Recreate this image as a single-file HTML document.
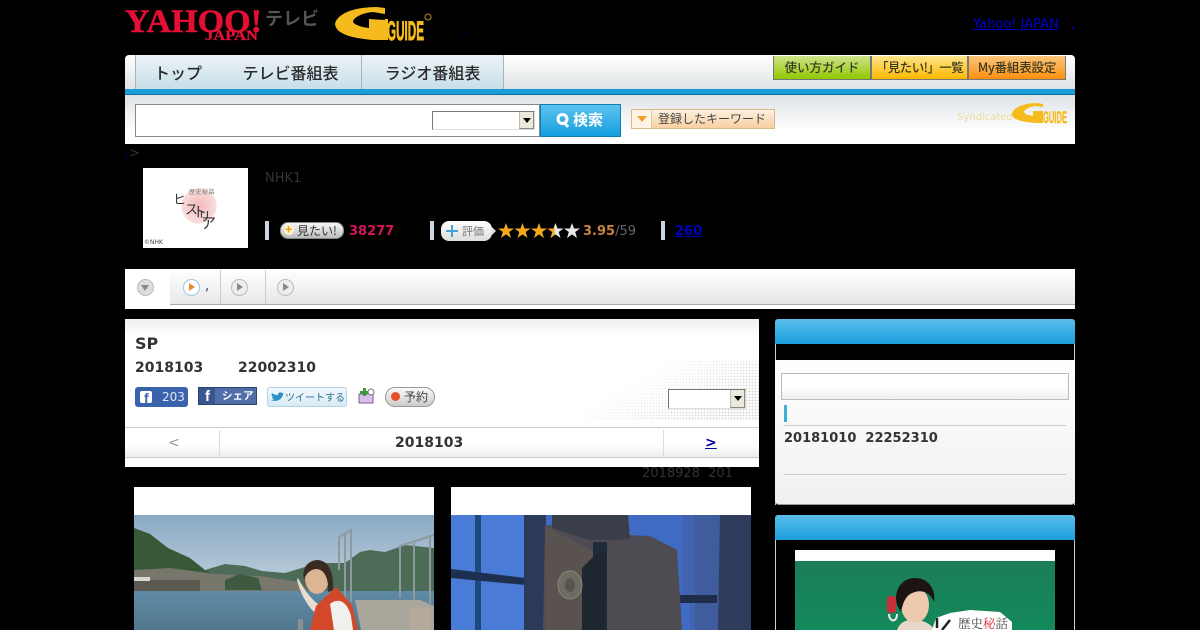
<!DOCTYPE html>
<html lang="ja"><head><meta charset="utf-8"><title>SP</title>
<style>
html,body{margin:0;padding:0;background:#000;}
body{width:1200px;height:630px;overflow:hidden;position:relative;font-family:"DejaVu Sans","Noto Sans CJK JP",sans-serif;font-size:13px;color:#333;}
.a{position:absolute;white-space:nowrap;}
.j{font-family:"Noto Sans CJK JP","DejaVu Sans",sans-serif;}
.b{font-weight:bold;}
.tab{position:absolute;top:55px;height:34px;background:linear-gradient(#edf3f6,#c6dfe9);border-right:1px solid #9fb5c0;text-align:center;font:500 16px/34px "Noto Sans CJK JP",sans-serif;color:#2a2a2a;}
.btn{position:absolute;top:56px;height:23px;text-align:center;white-space:nowrap;overflow:hidden;font:500 12.5px/22px "Noto Sans CJK JP",sans-serif;color:#3a3a20;border:1px solid #777;border-top:0;box-sizing:content-box;}
.sel{position:absolute;background:#fff;border:1px solid #777;border-right-color:#ddd;border-bottom-color:#ddd;box-sizing:border-box;}
.sel i{position:absolute;right:0;top:0;bottom:0;width:15px;background:#ece9d8;border-left:1px solid #bbb;border-bottom:1px solid #888;border-right:1px solid #888;box-sizing:border-box;}
.sel i:after{content:"";position:absolute;left:3px;top:6px;border:4px solid transparent;border-top:5px solid #000;}
.sep{position:absolute;width:4px;height:19px;background:#ccd6e0;top:221px;}
.ttab{position:absolute;top:270px;height:34px;background:linear-gradient(#fff,#e8e8e8);border-right:1px solid #ccc;box-sizing:border-box;}
.circ{position:absolute;width:15px;height:15px;border-radius:50%;background:#eee;border:1px solid #bbb;box-sizing:content-box;}
.circ i{position:absolute;left:5px;top:3px;border:4.5px solid transparent;border-left:6px solid #888;border-right:0;}
.sh{position:absolute;background:linear-gradient(#59bdea,#1b9fdc);left:775px;width:300px;height:25px;border-radius:3px 3px 0 0;}
.h{position:absolute;font-family:"Noto Sans CJK JP",sans-serif;color:#333;line-height:1;}
</style></head><body>

<!-- header -->
<svg class="a" style="left:124px;top:4px" width="142" height="40" viewBox="0 0 142 40">
<text x="1" y="28" font-family="Liberation Serif" font-weight="bold" font-size="33" fill="#e50f35" stroke="#e50f35" stroke-width="0.5" textLength="137" lengthAdjust="spacingAndGlyphs">YAHOO!</text>
<text x="81" y="36" font-family="Liberation Serif" font-weight="bold" font-size="15" fill="#e50f35" stroke="#e50f35" stroke-width="0.3" textLength="53" lengthAdjust="spacingAndGlyphs">JAPAN</text>
</svg>
<div class="a j" style="left:265px;top:5px;font-size:18px;line-height:26px;color:#555;font-weight:700;">テレビ</div>
<svg class="a" style="left:333px;top:5px" width="102" height="38" viewBox="0 0 102 38">
<path d="M2 19C4 9 20 2 44 2L52 3 52 9 40 7C28 8 20 13 20 17C22 20 28 22 36 23L36 14 52 15 52 35 40 35C18 33 3 29 2 19Z" fill="#f5bb1c"/>
<rect x="52" y="14" width="3" height="21" fill="#f5bb1c"/>
<text x="54" y="35" font-family="Liberation Sans" font-weight="bold" font-size="27" fill="#f5bb1c" stroke="#f5bb1c" stroke-width="0.9" textLength="37" lengthAdjust="spacingAndGlyphs">GUIDE</text>
<circle cx="95" cy="12" r="3" fill="none" stroke="#b58d24" stroke-width="1"/>
</svg>
<div class="a" style="left:462px;top:23px;color:#00008b;">,</div>
<div class="a" style="left:973px;top:17px;color:#0000d0;text-decoration:underline;">Yahoo! JAPAN</div>
<div class="a" style="left:1071px;top:17px;color:#0000d0;">,</div>

<!-- nav -->
<div class="a" style="left:125px;top:55px;width:950px;height:34px;background:linear-gradient(#fff,#dfe3e5);border-radius:4px 4px 0 0;"></div>
<div class="tab" style="left:135px;width:84px;border-left:1px solid #9fb5c0;">トップ</div>
<div class="tab" style="left:220px;width:141px;">テレビ番組表</div>
<div class="tab" style="left:362px;width:141px;">ラジオ番組表</div>
<div class="btn" style="left:773px;width:96px;background:linear-gradient(#cfe48a,#8fc800);">使い方ガイド</div>
<div class="btn" style="left:871px;width:95px;background:linear-gradient(#fde58a,#ffb800);letter-spacing:-0.6px;">「見たい!」一覧</div>
<div class="btn" style="left:968px;width:96px;background:linear-gradient(#fdc67a,#ff9010);letter-spacing:-0.2px;">My番組表設定</div>
<div class="a" style="left:125px;top:89px;width:950px;height:6px;background:#1b9ed8;border-bottom:1px solid #0d6f9c;box-sizing:border-box;"></div>

<!-- search -->
<div class="a" style="left:125px;top:95px;width:950px;height:49px;background:linear-gradient(#dfe3e6,#fff 75%);"></div>
<div class="a" style="left:135px;top:104px;width:405px;height:33px;background:#fff;border:1px solid #888;box-sizing:border-box;"></div>
<div class="sel" style="left:432px;top:111px;width:103px;height:19px;"><i></i></div>
<div class="a j" style="left:540px;top:104px;width:81px;height:33px;background:linear-gradient(#5cc3ef,#159fe0);border:1px solid #0d7db5;box-sizing:border-box;color:#fff;font-weight:700;font-size:15px;line-height:30px;letter-spacing:0;"><svg style="position:absolute;left:15px;top:7px" width="14" height="16" viewBox="0 0 14 16"><circle cx="6.5" cy="7" r="4.5" fill="none" stroke="#fff" stroke-width="3"/><path d="M8 10L12 15" stroke="#fff" stroke-width="3"/></svg><span style="position:absolute;left:32px;top:0;">検索</span></div>
<div class="a j" style="left:631px;top:109px;width:144px;height:20px;background:linear-gradient(#fdf0e0,#f9cfa0);border:1px solid #d9b98c;box-sizing:border-box;font-size:12px;line-height:18px;color:#444;padding-left:26px;"><span style="position:absolute;left:0;top:0;width:19px;height:18px;background:#fff3e4;border-right:1px solid #e0c8a8;"></span><span style="position:absolute;left:5px;top:6px;border:5px solid transparent;border-top:6px solid #f39a2d;"></span>登録したキーワード</div>
<div class="a" style="left:957px;top:111px;font-size:10px;line-height:13px;color:#eadb9c;">Syndicated</div>
<svg class="a" style="left:1011px;top:102px" width="57" height="23" viewBox="0 0 57 23">
<path d="M1 12C2 6 12 1 26 1L32 2 32 5 25 4C17 5 13 8 13 10C14 13 18 13 22 14L22 9 32 9 32 21 25 21C12 20 1 18 1 12Z" fill="#f5bb1c"/>
<text x="32" y="21" font-family="Liberation Sans" font-weight="bold" font-size="17" fill="#f5bb1c" stroke="#f5bb1c" stroke-width="0.4" textLength="24" lengthAdjust="spacingAndGlyphs">GUIDE</text>
</svg>

<!-- breadcrumb -->
<div class="a" style="left:125px;top:147px;color:#0000a0;">.</div>
<div class="a" style="left:129px;top:146px;color:#333;">&gt;</div>

<!-- thumb -->
<div class="a" style="left:143px;top:168px;width:105px;height:80px;background:#fff;overflow:hidden;">
  <div style="position:absolute;left:38px;top:20px;width:36px;height:36px;border-radius:50%;background:radial-gradient(#f2b8b8,#f9dcdc 65%,#fff 78%);"></div>
  <div class="h" style="left:46px;top:21px;font-size:6px;color:#777;letter-spacing:0.5px;">歴史秘話</div>
  <span class="h" style="left:30px;top:24px;font-size:13px;">ヒ</span>
  <span class="h" style="left:42px;top:34px;font-size:13px;">ス</span>
  <span class="h" style="left:50px;top:37px;font-size:14px;">ト</span>
  <span class="h" style="left:55px;top:41px;font-size:13px;">リ</span>
  <span class="h" style="left:58px;top:47px;font-size:15px;">ア</span>
  <div style="position:absolute;left:1px;top:71px;font-size:6px;line-height:8px;color:#444;">©NHK</div>
</div>
<div class="a" style="left:265px;top:171px;color:#333;">NHK1</div>

<div class="sep" style="left:265px;"></div>
<div class="a j" style="left:280px;top:222px;width:64px;height:17px;border-radius:8px;background:linear-gradient(#f7f7f7,#bbb);border:1px solid #888;box-sizing:border-box;font-size:12px;line-height:15px;color:#333;padding-left:16px;"><span style="position:absolute;left:3px;top:2px;width:10px;height:10px;border-radius:50%;background:#fff3c8;"></span><span style="position:absolute;left:4px;top:-1px;color:#e8a317;font-weight:900;">+</span>見たい!</div>
<div class="a b" style="left:349px;top:224px;color:#d4145a;">38277</div>
<div class="sep" style="left:430px;"></div>
<div class="a j" style="left:441px;top:221px;width:51px;height:20px;border-radius:8px;background:linear-gradient(#fff,#ddd);box-sizing:border-box;font-size:11px;line-height:20px;color:#777;padding-left:21px;"><span style="position:absolute;left:5px;top:9px;width:12px;height:2px;background:#4a9fd8;"></span><span style="position:absolute;left:10px;top:4px;width:2px;height:12px;background:#4a9fd8;"></span>評価<span style="position:absolute;left:51px;top:6px;border:4px solid transparent;border-left:4px solid #ddd;border-right:0;"></span></div>
<svg class="a" style="left:498px;top:222px" width="84" height="18" viewBox="0 0 84 18">
<defs><polygon id="s" points="8,1 10,6.5 16,6.5 11.2,10 13,16 8,12.4 3,16 4.8,10 0,6.5 6,6.5"/><clipPath id="hc"><rect x="0" y="0" width="7" height="18"/></clipPath></defs>
<use href="#s" fill="#f5a81c"/><use href="#s" x="16.5" fill="#f5a81c"/><use href="#s" x="33" fill="#f5a81c"/>
<use href="#s" x="49.5" fill="#e8e8e8"/><g transform="translate(49.5 0)"><use href="#s" fill="#f5a81c" clip-path="url(#hc)"/></g><use href="#s" x="66" fill="#e8e8e8"/>
</svg>
<div class="a" style="left:583px;top:224px;color:#666;"><span class="b" style="color:#c8843c;">3.95</span>/59</div>
<div class="sep" style="left:661px;"></div>
<div class="a b" style="left:675px;top:224px;color:#0000c0;text-decoration:underline;">260</div>

<!-- tabs bar -->
<div class="a" style="left:125px;top:269px;width:950px;height:40px;background:#fff;"></div>
<div class="a" style="left:170px;top:270px;width:905px;height:34px;background:linear-gradient(#fff,#e6e6e6);border-bottom:1px solid #aaa;box-sizing:content-box;"></div>
<div class="ttab" style="left:170px;width:51px;"></div>
<div class="ttab" style="left:221px;width:45px;"></div>
<div class="circ" style="left:137px;top:279px;background:#ddd;"><i style="left:3px;top:5px;border:4.5px solid transparent;border-top:6px solid #888;border-bottom:0;"></i></div>
<div class="circ" style="left:183px;top:279px;background:#fff;border-color:#9cc9e0;"><i style="border-left-color:#e8892a;"></i></div>
<div class="a" style="left:205px;top:279px;color:#335;">,</div>
<div class="circ" style="left:231px;top:279px;"><i></i></div>
<div class="circ" style="left:277px;top:279px;"><i></i></div>

<!-- main panel -->
<div class="a" style="left:125px;top:319px;width:634px;height:148px;background:linear-gradient(#eee,#fff 18px);"></div>
<div class="a" style="left:583px;top:360px;width:176px;height:60px;background-image:radial-gradient(#d8d8d8 0.8px,transparent 1px);background-size:3px 3px;-webkit-mask-image:linear-gradient(150deg,transparent 30%,#000 85%);mask-image:linear-gradient(150deg,transparent 30%,#000 85%);"></div>
<div class="a b" style="left:135px;top:334px;font-size:16px;line-height:20px;">SP</div>
<div class="a b" style="left:135px;top:359px;font-size:14px;line-height:18px;">2018103</div>
<div class="a b" style="left:238px;top:359px;font-size:14px;line-height:18px;">22002310</div>

<div class="a" style="left:135px;top:387px;width:53px;height:20px;background:#3b63ad;border-radius:3px;color:#dfe6f5;font-size:12px;line-height:20px;padding-left:27px;box-sizing:border-box;"><span style="position:absolute;left:5px;top:4px;width:12px;height:12px;background:#fff;border-radius:2px;"></span><span class="b" style="position:absolute;left:9px;top:3px;color:#3b63ad;font:bold 14px/16px 'Liberation Sans',sans-serif;">f</span>203</div>
<div class="a j" style="left:198px;top:387px;width:59px;height:18px;background:#506ea8;border:1px solid #2c4270;box-sizing:border-box;color:#fff;font-size:10.5px;line-height:16px;padding-left:23px;font-weight:700;"><span style="position:absolute;left:0;top:0;width:16px;height:16px;background:#3b5590;"></span><span style="position:absolute;left:6px;top:0;font:bold 15px/17px 'Liberation Sans',sans-serif;">f</span>シェア</div>
<div class="a j" style="left:267px;top:387px;width:80px;height:20px;background:linear-gradient(#f2f9fd,#d6ebf5);border:1px solid #b4d4e4;border-radius:3px;box-sizing:border-box;color:#2f6f96;font-size:10px;line-height:18px;padding-left:17px;"><svg style="position:absolute;left:3px;top:4px" width="13" height="10"><path d="M0 8C4 10 11 9 12 2L13 1 11 1C10 0 7 0 7 3 4 3 2 2 1 1 0 3 1 4 2 5L1 5C1 6 2 7 3 7 2 8 1 8 0 8Z" fill="#2d8fc4"/></svg>ツイートする</div>
<svg class="a" style="left:358px;top:388px" width="17" height="16" viewBox="0 0 17 16">
<rect x="1" y="6" width="14" height="9" fill="#d8c0ec" stroke="#7a5c9a"/>
<path d="M2 3H5V0H8V3H10V6H8V8H5V6H2Z" fill="#3a9a3a"/><circle cx="13" cy="4" r="3" fill="#fff" stroke="#777"/>
</svg>
<div class="a j" style="left:385px;top:387px;width:50px;height:20px;border-radius:10px;background:linear-gradient(#fafafa,#ccc);border:1px solid #999;box-sizing:border-box;font-size:12px;line-height:17px;color:#444;padding-left:18px;"><span style="position:absolute;left:5px;top:4px;width:9px;height:9px;border-radius:50%;background:#e8502a;"></span>予約</div>
<div class="sel" style="left:668px;top:389px;width:78px;height:20px;"><i></i></div>

<div class="a" style="left:125px;top:427px;width:634px;height:31px;background:linear-gradient(#fff 60%,#ececec);border-top:1px solid #ccc;border-bottom:1px solid #ccc;box-sizing:border-box;"></div>
<div class="a" style="left:219px;top:430px;width:1px;height:26px;background:#ddd;"></div>
<div class="a" style="left:663px;top:430px;width:1px;height:26px;background:#ddd;"></div>
<div class="a" style="left:168px;top:434px;font-size:14px;line-height:18px;color:#999;">&lt;</div>
<div class="a b" style="left:395px;top:434px;font-size:14px;line-height:18px;">2018103</div>
<div class="a b" style="left:705px;top:434px;font-size:14px;line-height:18px;color:#0000a0;text-decoration:underline;">&gt;</div>
<div class="a" style="left:642px;top:466px;color:#333;">2018928&nbsp;&nbsp;201</div>

<!-- photo 1 -->
<div class="a" style="left:134px;top:487px;width:300px;height:143px;background:#fff;overflow:hidden;">
<svg style="position:absolute;left:0;top:28px" width="300" height="115" viewBox="134 515 300 115">
<defs><linearGradient id="sky" x1="0" y1="0" x2="0" y2="1"><stop offset="0" stop-color="#8aa9c4"/><stop offset="1" stop-color="#c4d4df"/></linearGradient>
<linearGradient id="wat" x1="0" y1="0" x2="0" y2="1"><stop offset="0" stop-color="#5f8ba6"/><stop offset="1" stop-color="#54778d"/></linearGradient></defs>
<rect x="134" y="515" width="300" height="80" fill="url(#sky)"/>
<path d="M205 570L225 564 245 566 262 571 285 573 305 567 320 563 345 563 360 552 370 550 385 552 405 545 434 548V592H205Z" fill="#4c6c58"/>
<path d="M134 528L150 534 168 548 190 558 205 570 215 575 134 585Z" fill="#385837"/>
<path d="M134 570L170 568 215 574 260 576 300 582 310 592H134Z" fill="#77776b"/>
<path d="M134 580H200V592H134Z" fill="#5b5950"/><path d="M134 577H150V581H134Z" fill="#d8d8d0"/>
<path d="M225 580L240 574 258 578 262 590H225Z" fill="#3d5a40"/>
<rect x="134" y="591" width="300" height="39" fill="url(#wat)"/>
<path d="M355 600H420L434 606V630H361Z" fill="#a9a79c"/>
<rect x="410" y="608" width="20" height="22" fill="#b5a99c"/>
<path d="M339 570V537L351 530V602M345 534V600M400 598V546L434 535M414 600V543M430 535V606" fill="none" stroke="#8e9a9e" stroke-width="2"/>
<path d="M298 578C303 588 310 598 318 604L314 612C306 604 300 592 297 580Z" fill="#e8dccf"/>
<ellipse cx="317" cy="578" rx="12" ry="16" fill="#dcb595"/>
<path d="M304 580C301 566 310 560 318 560 330 561 334 575 333 590L328 592C329 582 326 570 317 569 311 569 306 573 304 580Z" fill="#3a2a22"/>
<path d="M310 630L316 606 336 587 352 605 358 630Z" fill="#d4482a"/>
<path d="M330 604C340 596 348 604 351 616L353 630H334Z" fill="#f2f0ec"/>
<rect x="298" y="619" width="5" height="11" fill="#8a8f8f"/>
</svg></div>

<!-- photo 2 -->
<div class="a" style="left:451px;top:487px;width:300px;height:143px;background:#fff;overflow:hidden;">
<svg style="position:absolute;left:0;top:28px" width="300" height="115" viewBox="451 515 300 115">
<rect x="451" y="515" width="300" height="115" fill="#3f6bc4"/>
<path d="M451 515H525V630H451Z" fill="#4a7bd6"/>
<rect x="475" y="515" width="6" height="115" fill="#1d4a80"/>
<path d="M451 569L525 578V585L451 578Z" fill="#1e3050"/>
<rect x="524" y="515" width="22" height="115" fill="#2a3a58"/>
<path d="M630 515H751V630H690V600H682V515Z" fill="#4264b0"/>
<path d="M695 515H720V630H695Z" fill="#3f5c9c"/>
<rect x="677" y="595" width="40" height="8" fill="#1f2d4a"/>
<path d="M720 515H751V630H718Z" fill="#2f3c5c"/>
<path d="M545 525L620 530 628 535 650 536 677 550 682 630H543Z" fill="#4e4c52"/>
<path d="M545 526L600 555 590 630H545Z" fill="#5a5250"/>
<path d="M552 515H628L630 538 618 540H590L552 528Z" fill="#3a3e4a"/>
<rect x="593" y="542" width="14" height="88" fill="#1f2a3c"/><path d="M582 568L597 553H607L604 630H582Z" fill="#1e2630"/>
<ellipse cx="570" cy="585" rx="12" ry="14" fill="#6e6c62" stroke="#8a8778"/>
<ellipse cx="570" cy="585" rx="5" ry="7" fill="#57564e"/>
</svg></div>

<!-- side box 1 -->
<div class="sh" style="top:319px;"></div>
<div class="a" style="left:775px;top:344px;width:298px;height:161px;border-left:1px solid #ccc;border-right:1px solid #ccc;"></div>
<div class="a" style="left:775px;top:360px;width:300px;height:145px;background:linear-gradient(#fff,#f0f0f0);border-radius:0 0 4px 4px;border-bottom:1px solid #999;box-sizing:border-box;"></div>
<div class="a" style="left:781px;top:373px;width:288px;height:27px;background:linear-gradient(#fff 50%,#eee);border:1px solid #bbb;box-sizing:border-box;"></div>
<div class="a" style="left:784px;top:405px;width:3px;height:17px;background:#3eb0d8;"></div>
<div class="a" style="left:784px;top:425px;width:282px;height:1px;background:#ccc;"></div>
<div class="a b" style="left:784px;top:431px;">20181010&nbsp;&nbsp;22252310</div>
<div class="a" style="left:784px;top:474px;width:282px;height:1px;background:#ccc;"></div>

<!-- side box 2 -->
<div class="sh" style="top:515px;"></div>
<div class="a" style="left:775px;top:540px;width:298px;height:90px;border-left:1px solid #ccc;border-right:1px solid #ccc;"></div>
<div class="a" style="left:795px;top:550px;width:260px;height:80px;background:#fff;overflow:hidden;">
<svg style="position:absolute;left:0;top:11px" width="260" height="69" viewBox="795 561 260 69">
<defs><linearGradient id="gr" x1="0" y1="0" x2="0" y2="1"><stop offset="0" stop-color="#1c7d58"/><stop offset="1" stop-color="#138a5a"/></linearGradient></defs>
<rect x="795" y="561" width="260" height="69" fill="url(#gr)"/>
<path d="M897 630C900 622 906 619 916 620 926 621 932 625 934 630Z" fill="#ead9cb"/>
<ellipse cx="915" cy="605" rx="14" ry="18" fill="#eec9ad"/>
<path d="M897 605C893 590 902 578 915 578 929 578 936 590 934 602 930 592 922 590 915 592 908 594 904 598 901 612Z" fill="#1c1412"/>
<rect x="887" y="596" width="9" height="17" rx="3" fill="#c8303a"/>
<path d="M889 614C889 622 897 623 897 614" fill="none" stroke="#eee" stroke-width="2"/>
<path d="M932 630L936 618 950 613 970 610 1000 612 1012 622 1012 630Z" fill="#fff"/>
<path d="M937 618V628M942 630L950 620" stroke="#222" stroke-width="2.5" fill="none"/>
<text x="958" y="628" font-family="Noto Serif CJK SC,serif" font-size="12.5" fill="#444">歴史<tspan fill="#d8303a">秘</tspan>話</text>
</svg></div>
</body></html>
